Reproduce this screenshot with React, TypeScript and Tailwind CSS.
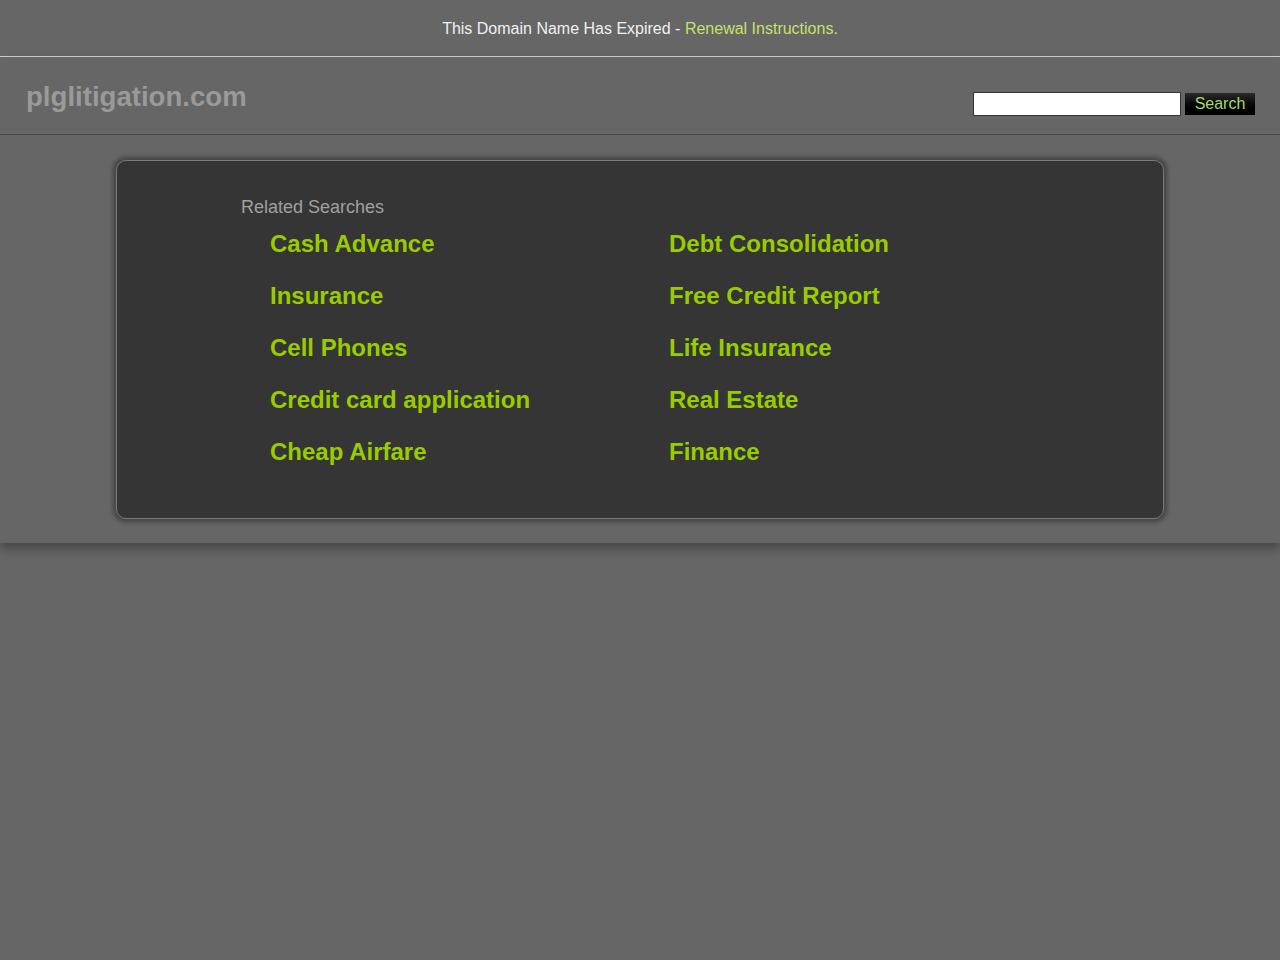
import { useState } from 'react';

const leftLinks = ['Cash Advance', 'Insurance', 'Cell Phones', 'Credit card application', 'Cheap Airfare'];
const rightLinks = ['Debt Consolidation', 'Free Credit Report', 'Life Insurance', 'Real Estate', 'Finance'];

export default function App() {
  const [query, setQuery] = useState('');

  return (
    <div className="min-h-[960px] bg-[#666666] font-['Liberation_Sans',Arial,sans-serif]">
      {/* expired notice */}
      <div className="h-[57px] pt-[1px] border-b border-[#cfcfcf] flex items-center justify-center text-[16px] text-[#f0f0f0]">
        <span>
          This Domain Name Has Expired - <a href="#" className="text-[#c8e06a]">Renewal Instructions.</a>
        </span>
      </div>

      <div className="shadow-[0_6px_10px_rgba(0,0,0,0.3)]">
        {/* header */}
        <div className="h-[78px] border-b border-[#4a4a4a] flex items-start justify-between pl-[26px] pr-[25px]">
          <h1 className="pt-[26px] text-[27.6px] font-bold text-[#9a9a9a] leading-none">plglitigation.com</h1>
          <form className="pt-[35px] flex items-center gap-[4px]" onSubmit={(e) => e.preventDefault()}>
            <input
              value={query}
              onChange={(e) => setQuery(e.target.value)}
              className="w-[208px] h-[24px] bg-white border border-[#333] outline-none px-1 text-sm"
            />
            <button className="w-[70px] h-[22px] bg-gradient-to-b from-[#2a2a2a] to-[#000] text-[#a8d86a] text-[16px] leading-none">
              Search
            </button>
          </form>
        </div>

        {/* related searches */}
        <div className="pt-[25px] pb-[24px] flex justify-center">
          <div className="w-[1048px] rounded-[10px] bg-[#353535] border border-[#7a7a7a] shadow-[0_0_4px_3px_rgba(40,40,40,0.55)] pt-[37px] pb-[28px] pl-[124px]">
            <h2 className="text-[18px] text-[#a0a0a0] leading-none">Related Searches</h2>
            <div className="mt-[14px] pl-[29px] grid grid-cols-[399px_1fr]">
              <ul>
                {leftLinks.map((l) => (
                  <li key={l} className="h-[52px]">
                    <a href="#" className="text-[24px] font-bold text-[#99cc00] leading-[28px]">{l}</a>
                  </li>
                ))}
              </ul>
              <ul>
                {rightLinks.map((l) => (
                  <li key={l} className="h-[52px]">
                    <a href="#" className="text-[24px] font-bold text-[#99cc00] leading-[28px]">{l}</a>
                  </li>
                ))}
              </ul>
            </div>
          </div>
        </div>
      </div>
    </div>
  );
}
